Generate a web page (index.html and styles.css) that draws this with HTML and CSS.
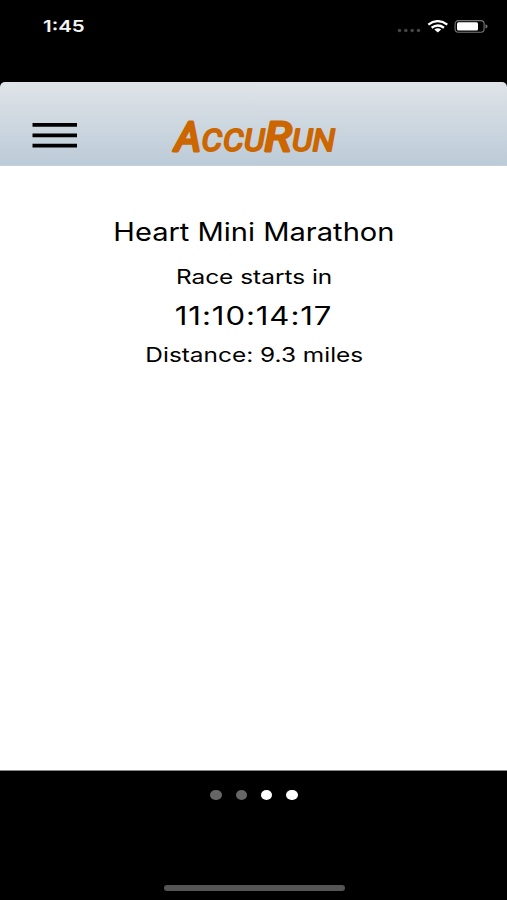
FILE: index.html
```html
<!DOCTYPE html>
<html lang="en">
<head>
<meta charset="utf-8">
<title>AccuRun</title>
<link rel="stylesheet" href="styles.css">
</head>
<body>
<div class="status">
  <span class="time">1:45</span>
  <svg class="indicators" width="92" height="20" viewBox="0 0 92 20">
    <g fill="#444"><circle cx="2.5" cy="10.5" r="1.8"/><circle cx="8.8" cy="10.5" r="1.8"/><circle cx="15.2" cy="10.5" r="1.8"/><circle cx="21.5" cy="10.5" r="1.8"/></g>
    <g fill="none" stroke="#fff" stroke-width="2.3"><path d="M31.3 4.7Q40.7-2.4 50.3 4.7"/><path d="M34.6 7.7Q40.7 3.2 47 7.7"/></g>
    <path fill="#fff" d="M37.4 9.4Q40.7 7 44.2 9.4L40.8 12.5Z"/>
    <rect x="58.1" y=".6" width="29" height="11.6" rx="3.2" fill="none" stroke="#777" stroke-width="1.1"/>
    <rect x="60" y="2.2" width="21" height="8.4" rx="1.5" fill="#fff"/>
    <path fill="#777" d="M88.5 4.2Q90.5 4.8 90.5 6.4T88.5 8.6Z"/>
  </svg>
</div>
<header class="header">
  <svg class="menu" width="45" height="26" viewBox="0 0 45 26"><path d="M.5 1.8H45M.5 12.3H45M.5 22.7H45" stroke="#000" stroke-width="3.8"/></svg>
  <svg class="logo" width="170" height="40" viewBox="0 0 170 40" aria-label="AccuRun">
    <text y="33.7"><tspan class="cap" x="5" textLength="26" lengthAdjust="spacingAndGlyphs">A</tspan><tspan class="small" x="31.5" textLength="20.5" lengthAdjust="spacingAndGlyphs">C</tspan><tspan class="small" x="53" textLength="20.5" lengthAdjust="spacingAndGlyphs">C</tspan><tspan class="small" x="74" textLength="20.5" lengthAdjust="spacingAndGlyphs">U</tspan><tspan class="cap" x="94.5" textLength="27" lengthAdjust="spacingAndGlyphs">R</tspan><tspan class="small" x="122" textLength="20.5" lengthAdjust="spacingAndGlyphs">U</tspan><tspan class="small" x="142.5" textLength="22.5" lengthAdjust="spacingAndGlyphs">N</tspan></text>
  </svg>
</header>
<main class="race">
  <h1 class="name"><span>Heart Mini Marathon</span></h1>
  <p class="label"><span>Race starts in</span></p>
  <p class="timer"><span>11:10:14:17</span></p>
  <p class="distance"><span>Distance: 9.3 miles</span></p>
</main>
<footer class="footer">
  <div class="dots"><i></i><i></i><i class="on"></i><i class="on"></i></div>
  <div class="home"></div>
</footer>
</body>
</html>
```
FILE: styles.css
```css
* { box-sizing: border-box; }
body {
  margin: 0;
  height: 900px;
  overflow: hidden;
  display: flex;
  flex-direction: column;
  background: #000;
  color: #000;
  font-family: Inter, "Liberation Sans", sans-serif;
}
.status {
  height: 82px;
  display: flex;
  justify-content: space-between;
  align-items: flex-start;
  padding: 16px 18px 0 43px;
  color: #f5f5f5;
}
.time {
  font-size: 16.5px;
  line-height: 21px;
  font-weight: 600;
  transform: scaleX(1.24);
  transform-origin: left;
}
.indicators { margin-top: 4px; }
.header {
  height: 84px;
  display: flex;
  align-items: flex-start;
  padding: 41px 0 0 32px;
  border-radius: 5px 5px 0 0;
  background: linear-gradient(#dfe4e8, #bccbd8);
  border-bottom: 1px solid #c9d0d8;
}
.menu { display: block; }
.logo { margin: -6px 0 0 93px; overflow: visible; }
.logo text {
  font-family: Roboto, "Liberation Sans", sans-serif;
  font-weight: 400;
  font-style: italic;
  fill: #cc6600;
  stroke: #cc6600;
  stroke-linejoin: round;
}
.cap { font-size: 40px; stroke-width: 3px; }
.small { font-size: 31.5px; stroke-width: 2px; }
.race {
  height: 605px;
  padding: 48px 0 0 1px;
  background: #fff;
  text-align: center;
  border-bottom: 1px solid #888;
}
.race h1, .race p { margin: 0; font-weight: 400; white-space: nowrap; }
.race span { display: inline-block; transform: scaleX(1.22); }
.name { font-size: 25px; line-height: 36px; }
.race .name span { transform: scaleX(1.163); }
.label { font-size: 20px; line-height: 30px; padding-top: 12px; }
.timer { font-size: 25.5px; line-height: 36px; padding-top: 6px; }
.race .timer span { letter-spacing: .75px; }
.distance { font-size: 20px; line-height: 30px; padding-top: 6px; }
.footer {
  flex: 1;
  display: flex;
  flex-direction: column;
  justify-content: space-between;
  align-items: center;
  padding: 19px 0 9px 1px;
}
.dots { display: flex; gap: 14.2px; }
.dots i { width: 11.2px; height: 10px; border-radius: 50%; background: #666; }
.dots .on { background: #fff; }
.home { width: 181px; height: 6px; border-radius: 3px; background: #555; }
```
